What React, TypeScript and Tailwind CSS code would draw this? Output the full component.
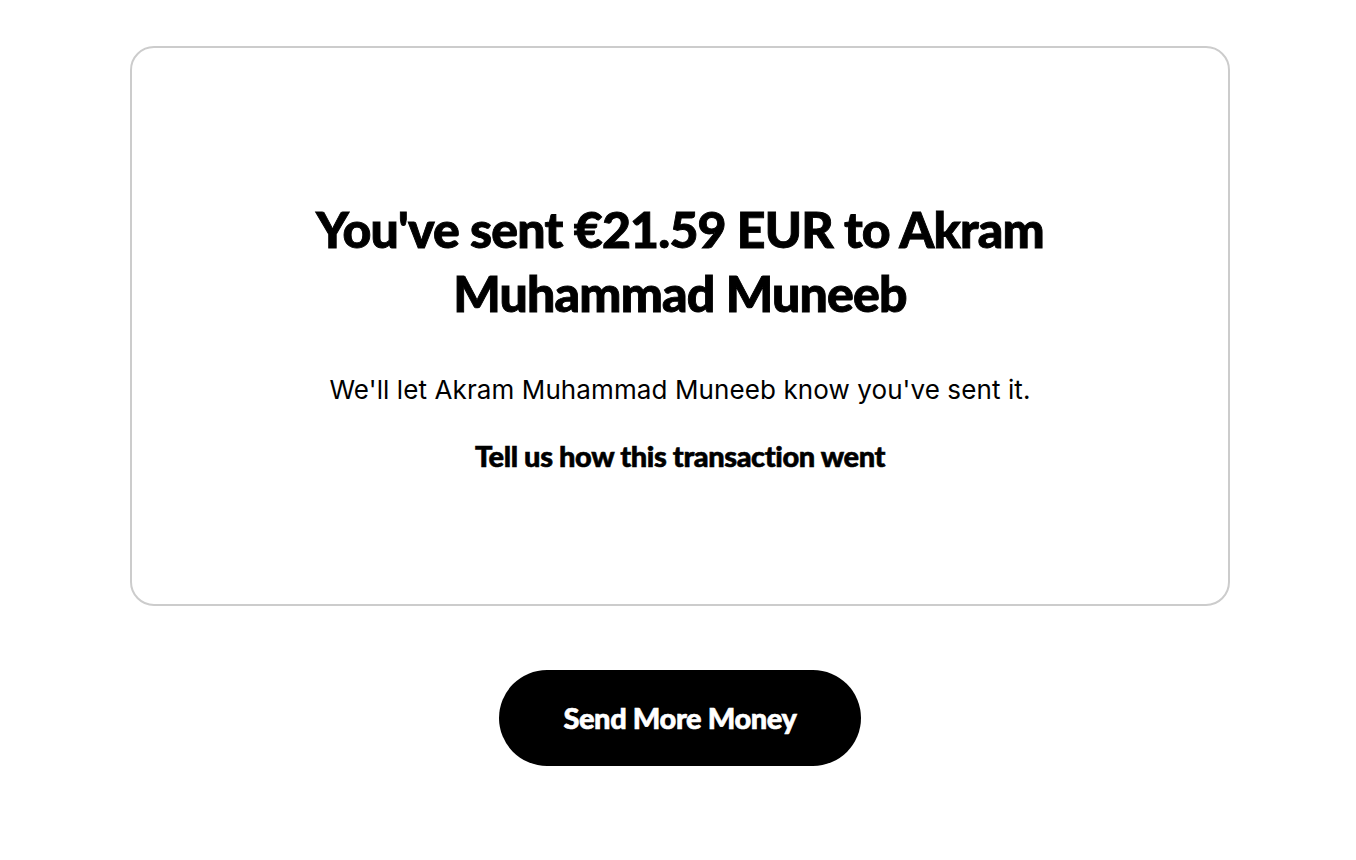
export default function App() {
  return (
    <div className="min-h-[860px] w-full bg-white pt-[46px] pl-[4px] flex flex-col items-center">
      <div className="w-[1100px] h-[560px] rounded-[24px] border-2 border-[#cccccc] flex flex-col items-center pt-[149px]">
        <h1 className="w-[820px] text-center text-black text-[50px] leading-[64px] tracking-[-0.8px] font-black font-[family-name:Lato,sans-serif] [-webkit-text-stroke:0.9px_black]">
          You've sent €21.59 EUR to Akram Muhammad Muneeb
        </h1>
        <p className="mt-[49px] text-[26px] leading-[32px] text-black tracking-[0.1px] font-normal font-[family-name:Inter,sans-serif]">
          We'll let Akram Muhammad Muneeb know you've sent it.
        </p>
        <p className="mt-[32px] text-[29px] leading-[36px] text-black tracking-[-0.4px] font-black font-[family-name:Lato,sans-serif] [-webkit-text-stroke:0.6px_black]">
          Tell us how this transaction went
        </p>
      </div>
      <button className="mt-[64px] w-[362px] h-[96px] rounded-full bg-black text-white text-[29px] tracking-[-0.4px] font-black font-[family-name:Lato,sans-serif] [-webkit-text-stroke:0.6px_white]">
        Send More Money
      </button>
    </div>
  );
}
